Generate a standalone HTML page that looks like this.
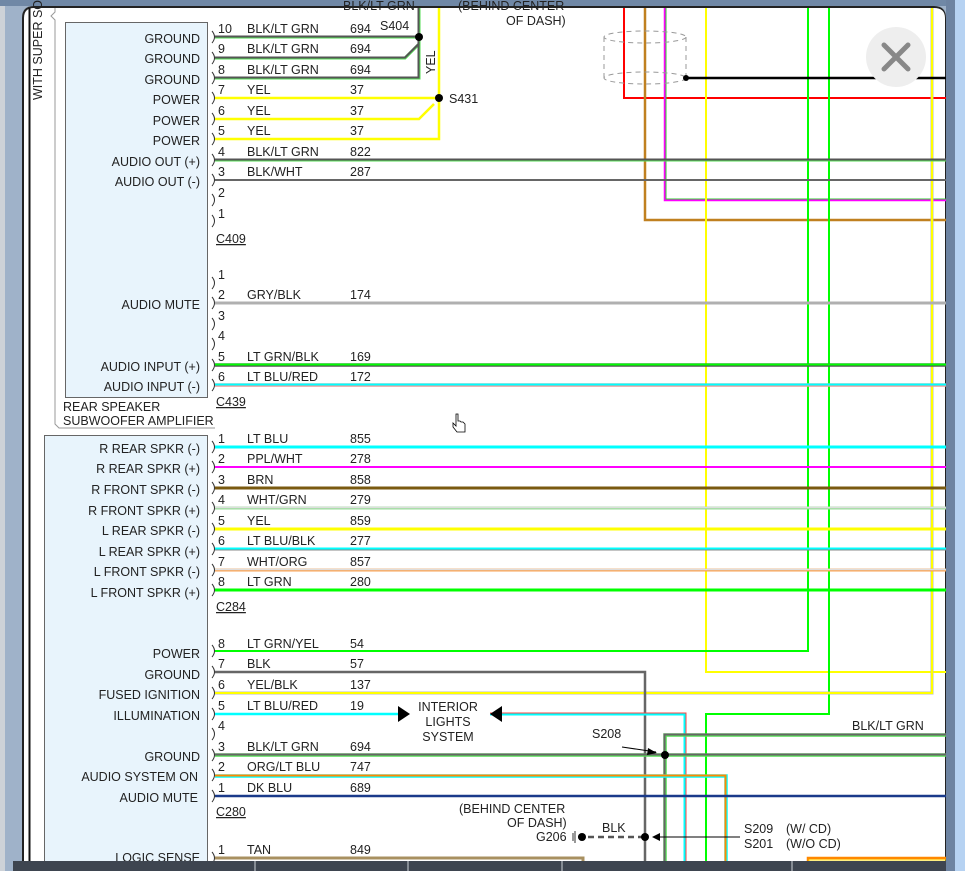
<!DOCTYPE html>
<html><head><meta charset="utf-8"><style>
html,body{margin:0;padding:0;width:965px;height:871px;overflow:hidden;background:#fff}
svg{display:block}
text{font-family:"Liberation Sans",sans-serif;font-size:12.5px;fill:#222}
</style></head><body>
<svg width="965" height="871" viewBox="0 0 965 871" xmlns="http://www.w3.org/2000/svg">
<rect x="0" y="0" width="965" height="871" fill="#9fb2c9"/>
<rect x="0" y="0" width="5" height="871" fill="#cdd2d8"/>
<rect x="0" y="0" width="965" height="6" fill="#7088a6"/>
<rect x="946" y="0" width="9" height="871" fill="#6d83a1"/>
<rect x="955" y="0" width="10" height="871" fill="#b6d2f2"/>
<path d="M22 871 V18 Q22 6 34 6 H934 Q946 6 946 18 V871 Z" fill="#222"/>
<path d="M24 871 V18 Q24 8 34 8 H934 Q945 8 945 18 V871 Z" fill="#fff"/>
<line x1="29.5" y1="8" x2="29.5" y2="861" stroke="#111" stroke-width="2"/>
<text transform="translate(42,100) rotate(-90)" font-size="12">WITH SUPER SO</text>
<path d="M55 8 V12 L51 16 L55 20 V424 L59 428 H215" fill="none" stroke="#999" stroke-width="1"/>
<rect x="65.5" y="22.5" width="142" height="375" fill="#e8f4fc" stroke="#666"/>
<rect x="44.5" y="435.5" width="163" height="430" fill="#e8f4fc" stroke="#666"/>
<text x="63" y="411">REAR SPEAKER</text>
<text x="63" y="425">SUBWOOFER AMPLIFIER</text>

<g font-size="12" text-anchor="end">
<text x="200" y="43">GROUND</text><text x="200" y="63">GROUND</text><text x="200" y="84">GROUND</text>
<text x="200" y="104">POWER</text><text x="200" y="125">POWER</text><text x="200" y="145">POWER</text>
<text x="200" y="166">AUDIO OUT (+)</text><text x="200" y="186">AUDIO OUT (-)</text>
<text x="200" y="309">AUDIO MUTE</text>
<text x="200" y="371">AUDIO INPUT (+)</text><text x="200" y="391">AUDIO INPUT (-)</text>
<text x="200" y="453">R REAR SPKR (-)</text><text x="200" y="473">R REAR SPKR (+)</text>
<text x="200" y="494">R FRONT SPKR (-)</text><text x="200" y="515">R FRONT SPKR (+)</text>
<text x="200" y="535">L REAR SPKR (-)</text><text x="200" y="556">L REAR SPKR (+)</text>
<text x="200" y="576">L FRONT SPKR (-)</text><text x="200" y="597">L FRONT SPKR (+)</text>
<text x="200" y="658">POWER</text><text x="200" y="679">GROUND</text>
<text x="200" y="699">FUSED IGNITION</text><text x="200" y="720">ILLUMINATION</text>
<text x="200" y="761">GROUND</text><text x="198" y="781">AUDIO SYSTEM ON</text>
<text x="198" y="802">AUDIO MUTE</text><text x="200" y="862">LOGIC SENSE</text>
</g>

<g fill="none" stroke-width="2">
<path d="M624 8 V98 H946" stroke="#f00"/>
<path d="M645 8 V220 H946" stroke="#c08020" stroke-width="2.5"/>
<path d="M665 8 V200 H946" stroke="#f0f" stroke-width="2.5"/>
<path d="M666 8 V199 H946" stroke="#3c3" stroke-width="1"/>
<path d="M706 8 V672 H946" stroke="#ff0"/>
<path d="M808 8 V651 H215" stroke="#0f0"/>
<path d="M829 8 V714 H706 V861" stroke="#0f0"/>
<path d="M932 8 V693 H215" stroke="#bbb" stroke-width="3"/>
<path d="M932 8 V693 H215" stroke="#ff0" stroke-width="2"/>
<path d="M686 78 H946" stroke="#000" stroke-width="2.5"/>
<path d="M419 8 V78 H215 M419 37 H215 M419 44 L405 58 H215" stroke="#5d5" stroke-width="3"/>
<path d="M418.5 8 V77.5 H215 M419 36.5 H215 M419 43.5 L405 57.5 H215" stroke="#555" stroke-width="2"/>
<path d="M439 8 V139 H215 M439 98 H215 M434 104 L419 119 H215" stroke="#ff0" stroke-width="2.5"/>
<path d="M215 160 H946" stroke="#5d5" stroke-width="3"/><path d="M215 159.5 H946" stroke="#555" stroke-width="2"/>
<path d="M215 180 H946" stroke="#666" stroke-width="2"/>
<path d="M215 303 H946" stroke="#b0b0b0" stroke-width="3"/>
<path d="M215 365 H946" stroke="#555" stroke-width="3.5"/><path d="M215 364.5 H946" stroke="#0f0" stroke-width="2"/>
<path d="M215 385 H946" stroke="#e99" stroke-width="3.5"/><path d="M215 384.5 H946" stroke="#0ff" stroke-width="2"/>
<path d="M215 447 H946" stroke="#0ff" stroke-width="3"/>
<path d="M215 467 H946" stroke="#f0f" stroke-width="2"/>
<path d="M215 488 H946" stroke="#7a5a10" stroke-width="3"/>
<path d="M215 508 H946" stroke="#9d9" stroke-width="3"/><path d="M215 507.5 H946" stroke="#ddd" stroke-width="1.5"/>
<path d="M215 529 H946" stroke="#ff0" stroke-width="3"/>
<path d="M215 549 H946" stroke="#888" stroke-width="3"/><path d="M215 548.5 H946" stroke="#0ff" stroke-width="2"/>
<path d="M215 570 H946" stroke="#f9a050" stroke-width="3"/><path d="M215 569.5 H946" stroke="#ddd" stroke-width="1.5"/>
<path d="M215 590 H946" stroke="#0f0" stroke-width="3"/>
<path d="M215 672 H645 V861" stroke="#666" stroke-width="2.5"/>
<path d="M215 714 H398" stroke="#0ff" stroke-width="2.5"/>
<path d="M490 714 H685 V861" stroke="#f44" stroke-width="3"/><path d="M490 714.5 H684.5 V861" stroke="#0ff" stroke-width="2"/>
<path d="M215 755 H946" stroke="#5d5" stroke-width="3.5"/><path d="M215 754.5 H946" stroke="#666" stroke-width="2"/>
<path d="M946 735 H665 V861" stroke="#5d5" stroke-width="3.5"/><path d="M946 734.5 H664.5 V861" stroke="#666" stroke-width="2"/>
<path d="M215 776 H726 V861" stroke="#0ff" stroke-width="3.5"/><path d="M215 775.5 H725.5 V861" stroke="#f80" stroke-width="2"/>
<path d="M215 796 H946" stroke="#1a3a8a" stroke-width="2.5"/>
<path d="M215 858 H583 V861" stroke="#a89060" stroke-width="3"/>
<path d="M808 861 V858 H946" stroke="#f80" stroke-width="2.5"/><path d="M809 861 V860 H946" stroke="#fd0" stroke-width="1"/>
<path d="M578 837 H645" stroke="#555" stroke-width="2.5" stroke-dasharray="6,4"/>
<path d="M740 837 H655" stroke="#000" stroke-width="1"/>
<path d="M622 747 L656 752" stroke="#000" stroke-width="1"/>
</g>
<polygon points="652,837 660,833 660,841" fill="#000"/>
<polygon points="657,753 648,748 647,755" fill="#000"/>
<polygon points="398,706 410,714 398,722" fill="#000"/>
<polygon points="502,706 490,714 502,722" fill="#000"/>
<g fill="none" stroke="#999" stroke-dasharray="5,4">
<ellipse cx="645" cy="37" rx="41" ry="6"/><ellipse cx="645" cy="78" rx="41" ry="6"/>
<path d="M604 37 V78 M686 37 V78"/>
</g>
<g fill="#000"><circle cx="419" cy="37" r="4"/><circle cx="439" cy="98" r="4"/><circle cx="686" cy="78" r="3"/>
<circle cx="665" cy="755" r="4"/><circle cx="645" cy="837" r="4"/><circle cx="582" cy="837" r="4"/></g>
<path d="M575 831 V843 M573 833 V841" stroke="#333" stroke-width="1"/>
<g fill="none" stroke="#333" stroke-width="1">
<path d="M212 31 q5 6 0 12 M212 52 q5 6 0 12 M212 72 q5 6 0 12 M212 92 q5 6 0 12 M212 113 q5 6 0 12 M212 133 q5 6 0 12 M212 154 q5 6 0 12 M212 174 q5 6 0 12 M212 194 q5 6 0 12 M212 215 q5 6 0 12"/>
<path d="M212 277 q5 6 0 12 M212 297 q5 6 0 12 M212 318 q5 6 0 12 M212 338 q5 6 0 12 M212 359 q5 6 0 12 M212 379 q5 6 0 12"/>
<path d="M212 441 q5 6 0 12 M212 461 q5 6 0 12 M212 482 q5 6 0 12 M212 502 q5 6 0 12 M212 523 q5 6 0 12 M212 543 q5 6 0 12 M212 564 q5 6 0 12 M212 584 q5 6 0 12"/>
<path d="M212 645 q5 6 0 12 M212 666 q5 6 0 12 M212 687 q5 6 0 12 M212 708 q5 6 0 12 M212 728 q5 6 0 12 M212 749 q5 6 0 12 M212 769 q5 6 0 12 M212 790 q5 6 0 12 M212 852 q5 6 0 12"/>
</g>
<g font-size="12">
<text x="218" y="33">10</text><text x="247" y="33">BLK/LT GRN</text><text x="350" y="33">694</text>
<text x="218" y="53">9</text><text x="247" y="53">BLK/LT GRN</text><text x="350" y="53">694</text>
<text x="218" y="74">8</text><text x="247" y="74">BLK/LT GRN</text><text x="350" y="74">694</text>
<text x="218" y="94">7</text><text x="247" y="94">YEL</text><text x="350" y="94">37</text>
<text x="218" y="115">6</text><text x="247" y="115">YEL</text><text x="350" y="115">37</text>
<text x="218" y="135">5</text><text x="247" y="135">YEL</text><text x="350" y="135">37</text>
<text x="218" y="156">4</text><text x="247" y="156">BLK/LT GRN</text><text x="350" y="156">822</text>
<text x="218" y="176">3</text><text x="247" y="176">BLK/WHT</text><text x="350" y="176">287</text>
<text x="218" y="197">2</text><text x="218" y="218">1</text>
<text x="216" y="243" text-decoration="underline">C409</text>
<text x="218" y="279">1</text>
<text x="218" y="299">2</text><text x="247" y="299">GRY/BLK</text><text x="350" y="299">174</text>
<text x="218" y="320">3</text><text x="218" y="340">4</text>
<text x="218" y="361">5</text><text x="247" y="361">LT GRN/BLK</text><text x="350" y="361">169</text>
<text x="218" y="381">6</text><text x="247" y="381">LT BLU/RED</text><text x="350" y="381">172</text>
<text x="216" y="406" text-decoration="underline">C439</text>
<text x="218" y="443">1</text><text x="247" y="443">LT BLU</text><text x="350" y="443">855</text>
<text x="218" y="463">2</text><text x="247" y="463">PPL/WHT</text><text x="350" y="463">278</text>
<text x="218" y="484">3</text><text x="247" y="484">BRN</text><text x="350" y="484">858</text>
<text x="218" y="504">4</text><text x="247" y="504">WHT/GRN</text><text x="350" y="504">279</text>
<text x="218" y="525">5</text><text x="247" y="525">YEL</text><text x="350" y="525">859</text>
<text x="218" y="545">6</text><text x="247" y="545">LT BLU/BLK</text><text x="350" y="545">277</text>
<text x="218" y="566">7</text><text x="247" y="566">WHT/ORG</text><text x="350" y="566">857</text>
<text x="218" y="586">8</text><text x="247" y="586">LT GRN</text><text x="350" y="586">280</text>
<text x="216" y="611" text-decoration="underline">C284</text>
<text x="218" y="648">8</text><text x="247" y="648">LT GRN/YEL</text><text x="350" y="648">54</text>
<text x="218" y="668">7</text><text x="247" y="668">BLK</text><text x="350" y="668">57</text>
<text x="218" y="689">6</text><text x="247" y="689">YEL/BLK</text><text x="350" y="689">137</text>
<text x="218" y="710">5</text><text x="247" y="710">LT BLU/RED</text><text x="350" y="710">19</text>
<text x="218" y="730">4</text>
<text x="218" y="751">3</text><text x="247" y="751">BLK/LT GRN</text><text x="350" y="751">694</text>
<text x="218" y="771">2</text><text x="247" y="771">ORG/LT BLU</text><text x="350" y="771">747</text>
<text x="218" y="792">1</text><text x="247" y="792">DK BLU</text><text x="350" y="792">689</text>
<text x="216" y="816" text-decoration="underline">C280</text>
<text x="218" y="854">1</text><text x="247" y="854">TAN</text><text x="350" y="854">849</text>
<text x="343" y="10">BLK/LT GRN</text>
<text x="380" y="30">S404</text>
<text x="449" y="103">S431</text>
<text transform="translate(435,74) rotate(-90)">YEL</text>
<text x="458" y="10">(BEHIND CENTER</text><text x="506" y="25">OF DASH)</text>
<text x="448" y="711" text-anchor="middle">INTERIOR</text>
<text x="448" y="726" text-anchor="middle">LIGHTS</text>
<text x="448" y="741" text-anchor="middle">SYSTEM</text>
<text x="592" y="738">S208</text>
<text x="852" y="730">BLK/LT GRN</text>
<text x="459" y="813">(BEHIND CENTER</text><text x="507" y="827">OF DASH)</text>
<text x="536" y="841">G206</text>
<text x="602" y="832">BLK</text>
<text x="744" y="833">S209</text><text x="786" y="833">(W/ CD)</text>
<text x="744" y="848">S201</text><text x="786" y="848">(W/O CD)</text>
</g>
<circle cx="896" cy="57" r="30" fill="#eeeeee"/>
<path d="M884 45 L908 69 M908 45 L884 69" stroke="#888" stroke-width="5" stroke-linecap="round"/>
<path d="M456 414 v12 l-3 -3 v4 l4 5 h8 v-8 l-2 -2 h-2 l-1 -1 h-2 v-7 z" fill="#fff" stroke="#000" stroke-width="0.8"/>
<rect x="13" y="861" width="933" height="10" fill="#3e4550"/>
<g stroke="#cfd3d8" stroke-width="1"><path d="M255 861 V871 M408 861 V871 M562 861 V871 M792 861 V871"/></g>
</svg>
</body></html>
